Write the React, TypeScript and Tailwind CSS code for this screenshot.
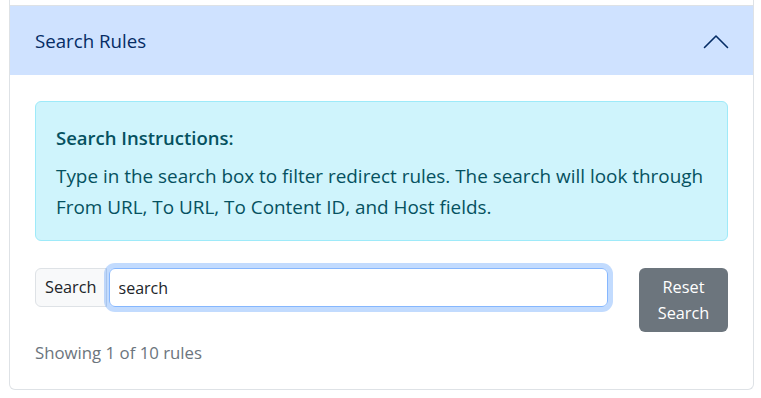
export default function App() {
  return (
    <div className="w-[761px] h-[398px] bg-white font-['Open_Sans',sans-serif]">
      <div className="ml-[9px] w-[745px] border-x border-b border-[#dee2e6] rounded-b-md">
        <div className="h-[5px]" />
        <div className="flex items-center justify-between h-[70px] px-[25px] bg-[#cfe2ff] border-t border-[#dee2e6] text-[#052c65]">
          <span className="text-[18.7px] pt-[1px]">Search Rules</span>
          <svg width="26" height="16" viewBox="0 0 26 16" fill="none" className="mt-[2px] -mr-[1px]">
            <polyline points="1.5,13.5 13,2 24.5,13.5" stroke="#052c65" strokeWidth="1.6" strokeLinecap="round" strokeLinejoin="round" />
          </svg>
        </div>
        <div className="px-[25px] pt-[26px] pb-[24px]">
          <div className="bg-[#cff4fc] border border-[#9eeaf9] rounded-md text-[#055160] px-5 pt-[21px] pb-[16px] h-[140px]">
            <h4 className="text-[18.5px] font-semibold leading-[30px]">Search Instructions:</h4>
            <p className="text-[18.9px] leading-[31px] mt-[8px]">
              Type in the search box to filter redirect rules. The search will look through From URL, To URL, To Content ID, and Host fields.
            </p>
          </div>
          <div className="flex items-start gap-[31px] mt-[27px]">
            <div className="flex flex-1 h-[39px] text-[16.3px]">
              <span className="flex items-center px-[9px] bg-[#f8f9fa] border border-[#dee2e6] rounded-l-md text-[#212529]">
                Search
              </span>
              <input
                defaultValue="search"
                className="flex-1 ml-[2px] px-[9px] border border-[#86b7fe] rounded-md shadow-[0_0_0_5px_rgba(13,110,253,0.25)] outline-none text-[#212529] text-[16px]"
              />
            </div>
            <button className="w-[89px] h-[64px] bg-[#6c757d] text-white rounded-md text-[16.3px] leading-[26px]">
              Reset Search
            </button>
          </div>
          <p className="mt-[8px] text-[16.8px] text-[#6c757d]">Showing 1 of 10 rules</p>
        </div>
      </div>
    </div>
  )
}
